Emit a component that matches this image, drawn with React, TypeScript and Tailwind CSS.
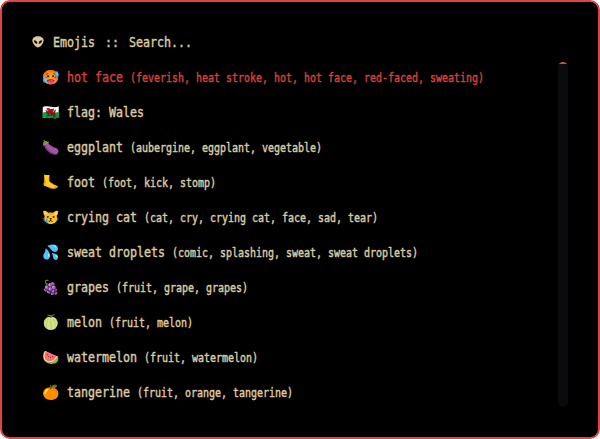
const items = [
  { icon: "🥵", name: "hot face", tags: "feverish, heat stroke, hot, hot face, red-faced, sweating" },
  { icon: "🏴󠁧󠁢󠁷󠁬󠁳󠁿", name: "flag: Wales", tags: "" },
  { icon: "🍆", name: "eggplant", tags: "aubergine, eggplant, vegetable" },
  { icon: "🦶", name: "foot", tags: "foot, kick, stomp" },
  { icon: "😿", name: "crying cat", tags: "cat, cry, crying cat, face, sad, tear" },
  { icon: "💦", name: "sweat droplets", tags: "comic, splashing, sweat, sweat droplets" },
  { icon: "🍇", name: "grapes", tags: "fruit, grape, grapes" },
  { icon: "🍈", name: "melon", tags: "fruit, melon" },
  { icon: "🍉", name: "watermelon", tags: "fruit, watermelon" },
  { icon: "🍊", name: "tangerine", tags: "fruit, orange, tangerine" },
];

export default function App() {
  return (
    <div className="h-[439px] w-[600px] bg-white">
      <div className="flex h-full w-full flex-col rounded-[10px] border-2 border-[#dc4542] bg-black pt-[30px] pl-[29px] font-['DejaVu_Sans_Mono',monospace] text-sm text-[#dcc9a0]">
        <header className="flex h-5 items-center [-webkit-text-stroke:0.45px]">
          <svg viewBox="0 0 14 14" className="h-[14px] w-[14px]">
            <path d="M7 1.2C3.6 1.2 1.4 3 1.4 5.4c0 3.2 3.8 7 5.6 7s5.6-3.8 5.6-7C12.6 3 10.4 1.2 7 1.2Z" fill="currentColor" />
            <path d="M3.2 5.6c1.8 0 2.9 1.1 2.9 2.9-1.8 0-2.9-1.2-2.9-2.9Zm7.6 0c-1.8 0-2.9 1.1-2.9 2.9 1.8 0 2.9-1.2 2.9-2.9Z" fill="#000" stroke="#000" strokeWidth="0.4" />
          </svg>
          <span className="ml-[8px] w-[52px] origin-left scale-x-[0.8305] whitespace-pre">Emojis</span>
          <span className="w-[24px] origin-left scale-x-[0.8305] whitespace-pre">::</span>
          <span className="origin-left scale-x-[0.8305] whitespace-pre">Search...</span>
        </header>
        <main className="mt-[7px] flex pl-[11px]">
          <ul className="w-[516px]">
            {items.map((item, i) => (
              <li key={item.name} className={`flex h-[35px] items-center ${i === 0 ? "text-[#d4403b]" : ""}`}>
                <span className="w-[25px] shrink-0 text-[14px]">{item.icon}</span>
                <span className="origin-left scale-x-[0.8305] whitespace-pre [-webkit-text-stroke:0.45px]">
                  {item.name}
                  {item.tags && <> <span className="text-xs">({item.tags})</span></>}
                </span>
              </li>
            ))}
          </ul>
          <div className="mt-[3px] h-[345px] w-[10px] overflow-hidden rounded-[5px] bg-[#0a0b0d]">
            <div className="h-[2px] bg-[#dc4542]" />
          </div>
        </main>
      </div>
    </div>
  );
}
